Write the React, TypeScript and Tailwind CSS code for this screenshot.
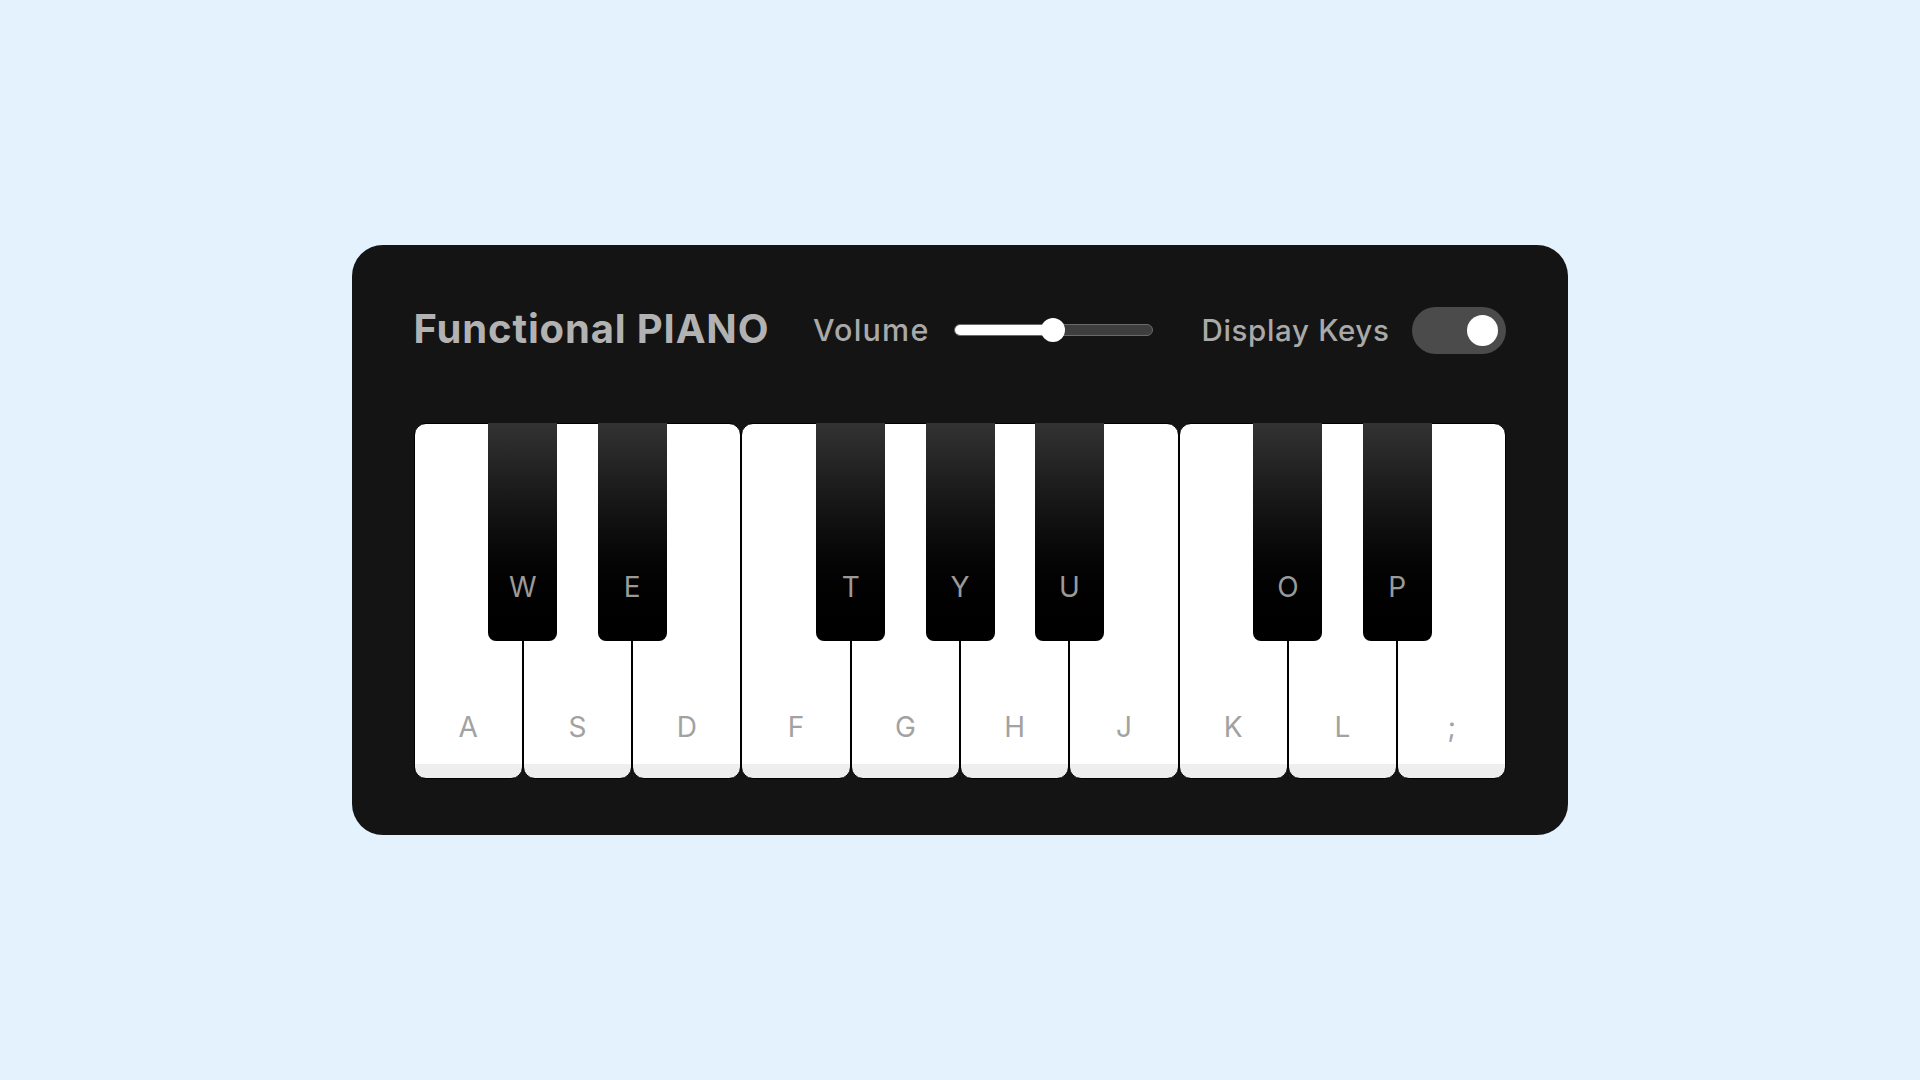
import React from 'react';

type PianoKey = { label: string; black: boolean };

const keys: PianoKey[] = [
  { label: 'a', black: false },
  { label: 'w', black: true },
  { label: 's', black: false },
  { label: 'e', black: true },
  { label: 'd', black: false },
  { label: 'f', black: false },
  { label: 't', black: true },
  { label: 'g', black: false },
  { label: 'y', black: true },
  { label: 'h', black: false },
  { label: 'u', black: true },
  { label: 'j', black: false },
  { label: 'k', black: false },
  { label: 'o', black: true },
  { label: 'l', black: false },
  { label: 'p', black: true },
  { label: ';', black: false },
];

function VolumeSlider() {
  return (
    <div className="relative ml-[24px] flex h-[24px] w-[199px] items-center">
      <div className="h-[12px] w-full overflow-hidden rounded-full border border-[#6a6a6a] bg-[#3e3e3e]">
        <div className="h-full w-1/2 bg-white" />
      </div>
      {/* thumb */}
      <span className="absolute left-[87px] top-0 h-[24px] w-[24px] rounded-full bg-white" />
    </div>
  );
}

function Toggle() {
  return (
    <div className="ml-[23px] flex h-[47px] w-[94px] items-center justify-end rounded-full bg-[#4b4b4b] pr-[8px]">
      <span className="h-[31px] w-[31px] rounded-full bg-white" />
    </div>
  );
}

export default function App() {
  return (
    <div className="flex min-h-screen items-center justify-center bg-[#e3f2fd] font-['Inter','Liberation_Sans',sans-serif]">
      <div className="rounded-[31px] bg-[#141414] px-[62px] pb-[56px] pt-[54px]">
        <header className="flex h-[62px] items-center justify-between">
          <h2 className="-mt-[2px] text-[40px] font-bold tracking-[0.85px] text-[#b2b2b2]">Functional PIANO</h2>
          <div className="flex items-center">
            <span className="text-[30.5px] font-medium tracking-[1.2px] text-[#a9a9a9]">Volume</span>
            <VolumeSlider />
            <span className="ml-[49px] text-[29.5px] font-medium tracking-[0.65px] text-[#a9a9a9]">Display Keys</span>
            <Toggle />
          </div>
        </header>

        <ul className="mt-[62px] flex">
          {keys.map((k) =>
            k.black ? (
              <li
                key={k.label}
                className="relative z-10 mx-[-34.5px] h-[218px] w-[69px] rounded-b-[8px] bg-linear-to-b from-[#333] to-black"
              >
                <span className="absolute bottom-[40px] w-full text-center text-[28px] leading-none text-[#9a9a9a] uppercase">
                  {k.label}
                </span>
              </li>
            ) : (
              <li
                key={k.label}
                className="relative h-[356px] w-[109.3px] rounded-[12px] border-[1.5px] border-black bg-[linear-gradient(#fff_96%,#eee_4%)]"
              >
                <span className="absolute bottom-[37px] w-full text-center text-[28px] leading-none text-[#a2a2a2] uppercase">
                  {k.label}
                </span>
              </li>
            )
          )}
        </ul>
      </div>
    </div>
  );
}
